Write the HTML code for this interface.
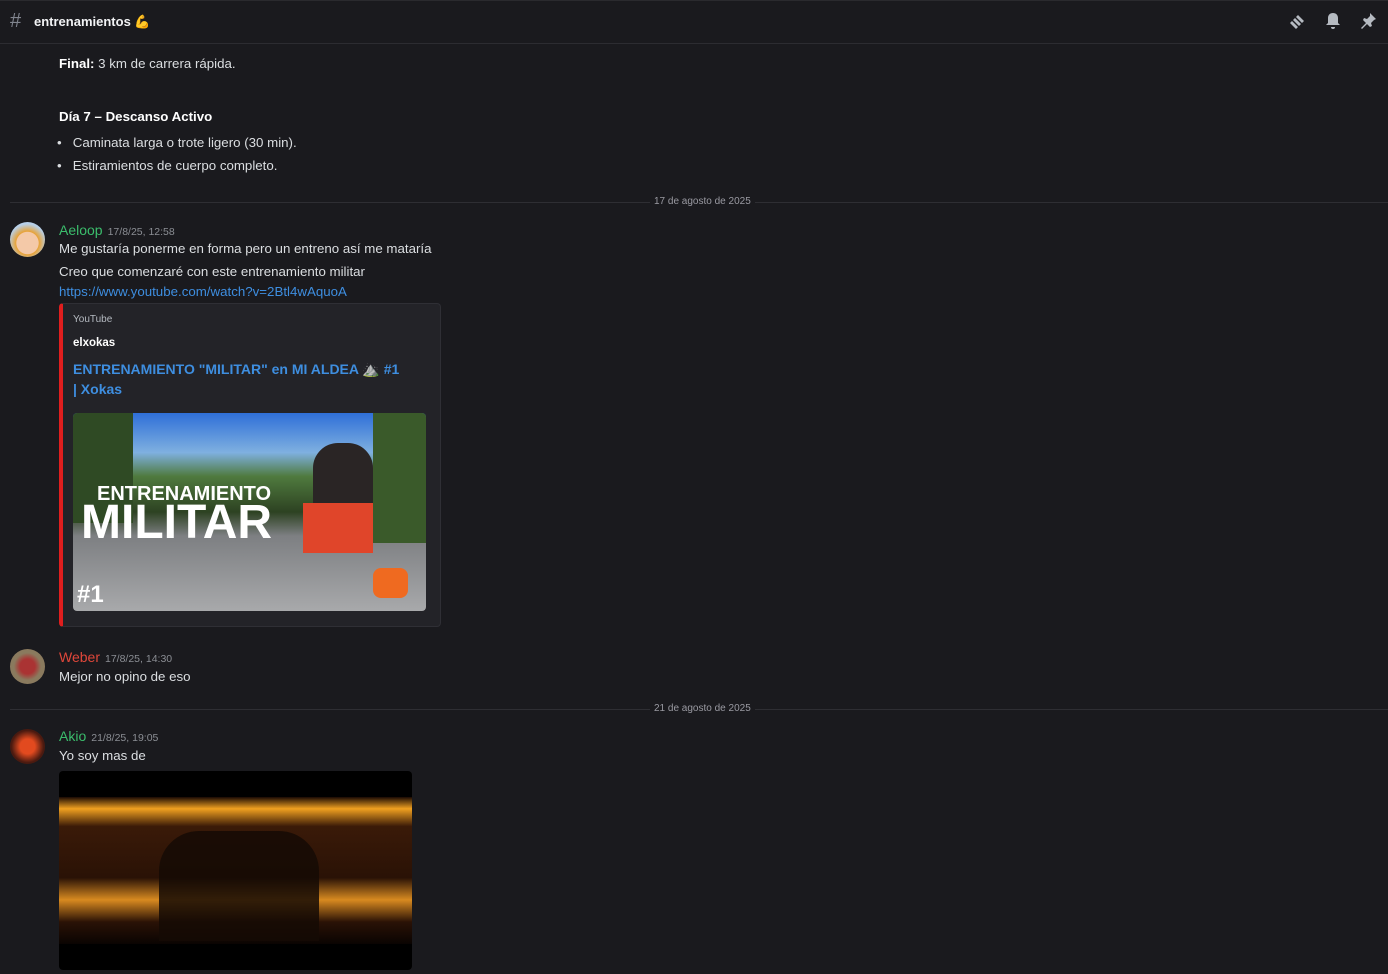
<!DOCTYPE html>
<html><head><meta charset="utf-8"><style>
body{margin:0;width:1388px;height:974px;background:#1a1a1e;font-family:"Liberation Sans",sans-serif;color:#dbdee1;overflow:hidden;position:relative;font-size:13.3px}
.a{position:absolute;white-space:nowrap}
.hdr{position:absolute;left:0;top:0;width:1388px;height:44px;border-bottom:1px solid #2c2c31;border-top:1px solid #2a2a2e;box-sizing:border-box}
.sep{position:absolute;left:10px;right:0;height:1px;background:#2e2e33}
.date{position:absolute;left:650px;background:#1a1a1e;padding:0 4px;font-size:10px;color:#9a9aa2}
.av{position:absolute;left:10px;width:35px;height:35px;border-radius:50%}
.ts{font-size:10.5px;color:#8b8e94;margin-left:5px}
</style></head><body>
<div class="hdr"></div>
<div class="a" style="left:10px;top:10px;font-size:20px;color:#80848e">#</div>
<div class="a" style="left:34px;top:14px;font-size:13px;color:#f2f3f5;font-weight:bold">entrenamientos 💪</div>
<svg class="a" style="left:1288px;top:13px" width="18" height="18" viewBox="0 0 18 18" fill="#b5bac1"><path d="M2 10l2-2 6 6-2 2zM5 7l2-2 6 6-2 2zM8 4l2-2 6 6-2 2z"/></svg>
<svg class="a" style="left:1325px;top:12px" width="16" height="18" viewBox="0 0 16 18" fill="#b5bac1"><path d="M8 1c3 0 5 2 5 5v5l2 2H1l2-2V6c0-3 2-5 5-5zM6 15h4a2 2 0 01-4 0z"/></svg>
<svg class="a" style="left:1360px;top:12px" width="17" height="18" viewBox="0 0 17 18" fill="#b5bac1"><path d="M10 1l6 6-2 1-3 3 1 3-2 1-3-3-5 5-1-1 5-5-3-3 1-2 3 1 3-3z"/></svg>

<div class="a" style="left:59px;top:56px"><b style="color:#fff">Final:</b> 3 km de carrera rápida.</div>
<div class="a" style="left:59px;top:109px;font-weight:bold;color:#fff">Día 7 – Descanso Activo</div>
<div class="a" style="left:57px;top:135px">•&nbsp;&nbsp;&nbsp;Caminata larga o trote ligero (30 min).</div>
<div class="a" style="left:57px;top:158px">•&nbsp;&nbsp;&nbsp;Estiramientos de cuerpo completo.</div>

<div class="sep" style="top:202px"></div><div class="date" style="top:196px">17 de agosto de 2025</div>
<div class="av" style="top:222px;background:radial-gradient(circle at 50% 60%,#f4c9a8 40%,#e8a235 42%,#b7d0ea 70%)"></div>
<div class="a" style="left:59px;top:222px;color:#3bbd6c;font-size:14px">Aeloop<span class="ts">17/8/25, 12:58</span></div>
<div class="a" style="left:59px;top:241px">Me gustaría ponerme en forma pero un entreno así me mataría</div>
<div class="a" style="left:59px;top:264px">Creo que comenzaré con este entrenamiento militar</div>
<div class="a" style="left:59px;top:284px;color:#3e8ee0">https://www.youtube.com/watch?v=2Btl4wAquoA</div>
<div class="a" style="left:59px;top:303px;width:382px;height:324px;background:#232328;border:1px solid #2f2f35;border-left:4px solid #e01e1e;box-sizing:border-box;border-radius:4px"></div>
<div class="a" style="left:73px;top:314px;font-size:10px;color:#b5bac1">YouTube</div>
<div class="a" style="left:73px;top:337px;font-size:11.5px;font-weight:bold;color:#fff">elxokas</div>
<div class="a" style="left:73px;top:359px;color:#3e8ee0;font-size:14px;line-height:20px;white-space:normal;width:330px;font-weight:bold">ENTRENAMIENTO "MILITAR" en MI ALDEA ⛰️ #1 | Xokas</div>
<div class="a" style="left:73px;top:413px;width:353px;height:198px;border-radius:4px;background:linear-gradient(180deg,#2f6fd8 0%,#7fb0e0 20%,#4f7a3e 32%,#2d4222 50%,#7d7f82 62%,#a8a9ab 100%);overflow:hidden">
<div style="position:absolute;left:0;top:0;width:60px;height:110px;background:#2f4a24"></div>
<div style="position:absolute;left:300px;top:0;width:53px;height:130px;background:#3a5a2a"></div>
<div style="position:absolute;left:240px;top:30px;width:60px;height:100px;background:#2a2525;border-radius:25px"></div>
<div style="position:absolute;left:230px;top:90px;width:70px;height:50px;background:#e0452a"></div>
<div style="position:absolute;left:300px;top:155px;width:35px;height:30px;background:#ef6a20;border-radius:8px"></div>
<div style="position:absolute;left:24px;top:70px;color:#fff;font-weight:bold;font-size:20px">ENTRENAMIENTO</div>
<div style="position:absolute;left:8px;top:82px;color:#fff;font-weight:900;font-size:48px">MILITAR</div>
<div style="position:absolute;left:4px;top:168px;color:#fff;font-weight:900;font-size:24px">#1</div>
</div>

<div class="av" style="top:649px;background:radial-gradient(circle,#a33 30%,#8a7a5e 55%)"></div>
<div class="a" style="left:59px;top:649px;color:#e0473a;font-size:14px">Weber<span class="ts">17/8/25, 14:30</span></div>
<div class="a" style="left:59px;top:669px">Mejor no opino de eso</div>

<div class="sep" style="top:709px"></div><div class="date" style="top:703px">21 de agosto de 2025</div>
<div class="av" style="top:729px;background:radial-gradient(circle,#e24a1f 30%,#4a1a10 65%)"></div>
<div class="a" style="left:59px;top:728px;color:#3bbd6c;font-size:14px">Akio<span class="ts">21/8/25, 19:05</span></div>
<div class="a" style="left:59px;top:748px">Yo soy mas de</div>
<div class="a" style="left:59px;top:771px;width:353px;height:199px;border-radius:4px;background:#000;overflow:hidden">
<div style="position:absolute;left:0;top:26px;width:353px;height:147px;background:linear-gradient(180deg,#1a0a04 0%,#f0a020 8%,#3a1a08 20%,#2a1206 55%,#d88a20 70%,#2a1206 85%,#0a0402 100%)"></div>
<div style="position:absolute;left:100px;top:60px;width:160px;height:110px;background:#150a05;border-radius:40px 40px 0 0;opacity:.85"></div>
</div>
</body></html>
